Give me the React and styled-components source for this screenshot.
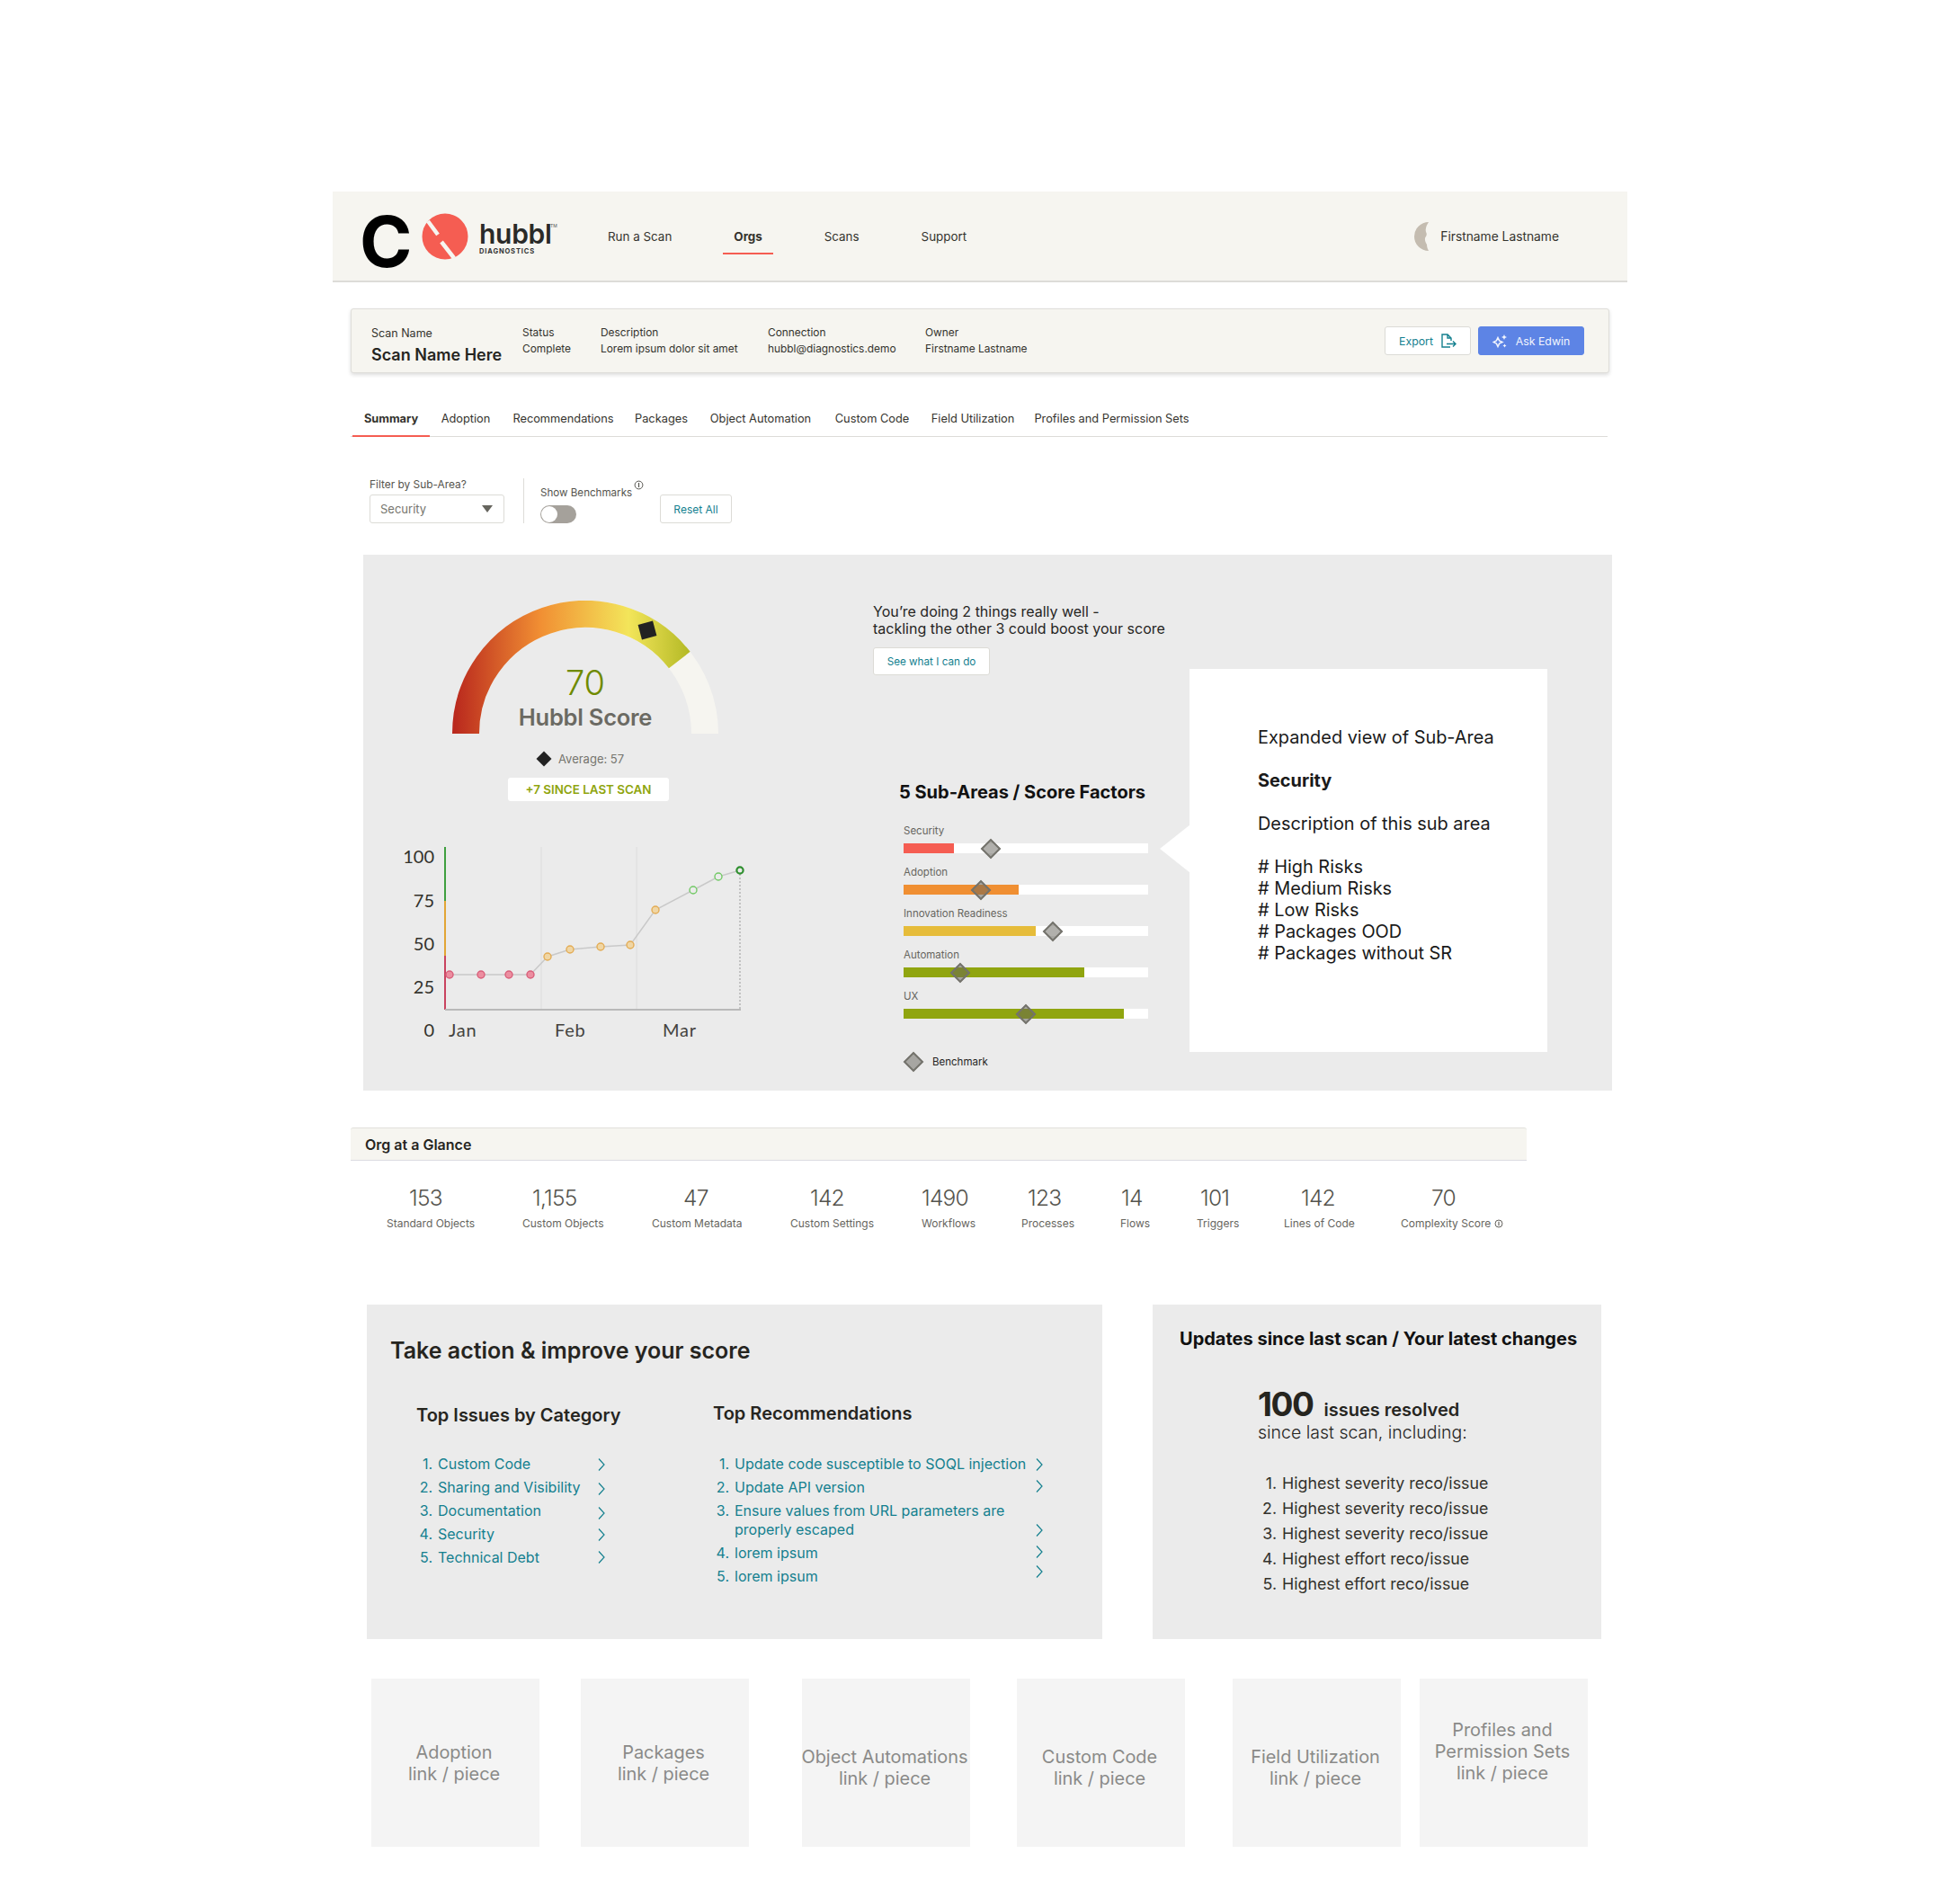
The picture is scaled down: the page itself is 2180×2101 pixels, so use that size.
import React from "react";
import styled, { createGlobalStyle } from "styled-components";

const SANS = `"Inter", "Liberation Sans", sans-serif`;
const TEAL = "#14808f";

const Global = createGlobalStyle`
  html, body { margin: 0; padding: 0; background: #fff; }
  body { font-family: ${SANS}; color: #26251f; letter-spacing: 0; }
  * { box-sizing: border-box; }
`;

const Page = styled.div`
  width: 2180px;
  height: 2101px;
  padding: 213px 0 0 370px;
  overflow: hidden;
`;
const Inner = styled.div`
  width: 1440px;
`;

const Header = styled.header`
  height: 101px;
  background: #f6f5f0;
  border-bottom: 2px solid #dddcd8;
  display: flex;
  align-items: flex-start;
  padding-left: 30px;
`;
const LogoC = styled.span`
  width: 61px;
  font-size: 79px;
  line-height: 100px;
  font-weight: 700;
  color: #000;
  margin-top: 5px;
`;
const LogoMark = styled.svg`
  width: 52px;
  height: 52px;
  margin-top: 24px;
  margin-left: 8px;
  flex: none;
`;
const Brand = styled.div`
  margin: 32px 0 0 12px;
  width: 128px;
  position: relative;
`;
const BrandName = styled.div`
  font-size: 30px;
  line-height: 30px;
  font-weight: 600;
  letter-spacing: -0.01em;
  color: #2a2a28;
`;
const BrandSub = styled.div`
  font-size: 7.5px;
  line-height: 8px;
  margin-top: 1px;
  font-weight: 700;
  letter-spacing: 0.115em;
  color: #333;
`;
const BrandTm = styled.span`
  position: absolute;
  left: 79px;
  top: 3px;
  font-size: 5px;
  line-height: 6px;
  color: #555;
`;
const Nav = styled.nav`
  display: flex;
  gap: 45px;
  margin-top: 34px;
  margin-left: 3px;
`;
const NavItem = styled.a`
  height: 36px;
  padding: 7px 12px 0;
  font-size: 13.4px;
  line-height: 18px;
  font-weight: ${(p) => (p.$active ? 700 : 400)};
  color: #34332d;
  border-bottom: 2px solid ${(p) => (p.$active ? "#f55d52" : "transparent")};
`;
const UserBox = styled.div`
  margin-left: auto;
  margin-right: 76px;
  margin-top: 34px;
  display: flex;
  align-items: center;
  gap: 13px;
  font-size: 13.8px;
  line-height: 32px;
  color: #34332d;
`;

const ScanBar = styled.section`
  margin: 29px 0 0 20px;
  width: 1400px;
  height: 72px;
  background: #f6f5f0;
  border: 1px solid #dfdeda;
  border-radius: 3px;
  box-shadow: 0 2px 4px rgba(0, 0, 0, 0.14);
  padding-left: 22px;
  padding-right: 27px;
  display: flex;
  align-items: center;
`;
const Meta = styled.div`
  width: ${(p) => p.$w}px;
  font-size: 11.9px;
  line-height: 18px;
  color: #34332d;
  align-self: flex-start;
  padding-top: 17px;
  white-space: nowrap;
`;
const ScanLabel = styled.div`
  font-size: 12.5px;
  line-height: 18px;
  margin-top: 1px;
`;
const ScanTitle = styled.div`
  font-size: 18px;
  line-height: 24px;
  font-weight: 600;
  margin-top: 3px;
  color: #26251f;
`;
const Actions = styled.div`
  margin-left: auto;
  display: flex;
  gap: 8px;
`;
const Btn = styled.button`
  font-family: ${SANS};
  height: ${(p) => p.$h || 32}px;
  width: ${(p) => p.$w}px;
  background: #fff;
  border: 1px solid #dcdbd6;
  border-radius: 3px;
  color: ${TEAL};
  font-size: ${(p) => p.$fs || 12.3}px;
  padding: 0;
  display: inline-flex;
  align-items: center;
  justify-content: center;
  gap: 8px;
  flex: none;
`;
const PrimaryBtn = styled(Btn)`
  background: #5d84e5;
  border-color: #5d84e5;
  color: #f2f5fd;
  gap: 9px;
`;

const Tabs = styled.div`
  margin: 24px 0 0 20px;
  width: 1398px;
  height: 47px;
  border-bottom: 1px solid #dddcd8;
  padding-left: 2px;
  display: flex;
  align-items: stretch;
`;
const Tab = styled.a`
  width: ${(p) => p.$w}px;
  height: 47px;
  display: flex;
  align-items: center;
  justify-content: center;
  padding-top: 7px;
  font-size: 12.8px;
  font-weight: ${(p) => (p.$active ? 700 : 400)};
  color: #34332d;
  white-space: nowrap;
  border-bottom: 2px solid ${(p) => (p.$active ? "#f55d52" : "transparent")};
`;

const Filters = styled.div`
  margin: 46px 0 0 41px;
  height: 50px;
  display: flex;
  align-items: flex-end;
`;
const FilterCol = styled.div`
  width: 150px;
`;
const FieldLabel = styled.div`
  font-size: 11.9px;
  line-height: 14px;
  color: #55544e;
  margin-bottom: 4px;
  white-space: nowrap;
`;
const Select = styled.div`
  height: 32px;
  background: #fff;
  border: 1px solid #dcdbd6;
  border-radius: 3px;
  padding: 0 12px 0 11px;
  display: flex;
  align-items: center;
  justify-content: space-between;
  font-size: 13px;
  color: #76756e;
`;
const Caret = styled.span`
  width: 0;
  height: 0;
  border-left: 6px solid transparent;
  border-right: 6px solid transparent;
  border-top: 8px solid #66655e;
`;
const VRule = styled.div`
  width: 1px;
  height: 50px;
  background: #dddcd8;
  margin: 0 18px 0 21px;
`;
const ToggleCol = styled.div`
  width: 133px;
  height: 50px;
  position: relative;
`;
const ToggleLabel = styled.div`
  display: flex;
  gap: 2px;
  font-size: 11.6px;
  line-height: 14px;
  color: #55544e;
  margin-top: 9px;
  white-space: nowrap;
`;
const InfoDot = styled.svg`
  width: ${(p) => p.$s || 11}px;
  height: ${(p) => p.$s || 11}px;
  margin-top: ${(p) => p.$mt ?? -7}px;
  flex: none;
`;
const Toggle = styled.div`
  margin-top: 7px;
  width: 40px;
  height: 20px;
  background: #a5a19b;
  border-radius: 10px;
  padding: 1px;
`;
const Knob = styled.div`
  width: 18px;
  height: 18px;
  background: #fff;
  border-radius: 50%;
`;

const Hero = styled.section`
  margin: 35px 0 0 34px;
  width: 1389px;
  height: 596px;
  background: #ebebeb;
  display: grid;
  grid-template-columns: 567px 352px 398px;
`;
const ScoreCol = styled.div`
  padding-top: 51px;
`;
const GaugeWrap = styled.div`
  width: 296px;
  height: 148px;
  margin-left: 99px;
  position: relative;
`;
const GaugeSvg = styled.svg`
  width: 296px;
  height: 148px;
  display: block;
`;
const ScoreValue = styled.div`
  position: absolute;
  left: 0;
  width: 100%;
  top: 68px;
  text-align: center;
  font-size: 38px;
  line-height: 46px;
  font-weight: 300;
  color: #6f8a00;
`;
const ScoreLabel = styled.div`
  position: absolute;
  left: 0;
  width: 100%;
  top: 114px;
  text-align: center;
  font-size: 25.5px;
  line-height: 32px;
  font-weight: 600;
  color: #6b6a63;
  letter-spacing: -0.01em;
`;
const AverageRow = styled.div`
  margin: 18px 0 0 195px;
  height: 20px;
  display: flex;
  align-items: center;
  gap: 10px;
  font-size: 13px;
  color: #76756e;
`;
const SmallDiamond = styled.span`
  width: 12px;
  height: 12px;
  background: #222;
  transform: rotate(45deg);
  flex: none;
`;
const SincePill = styled.div`
  margin: 11px 0 0 161px;
  width: 179px;
  height: 26px;
  background: #fff;
  border-radius: 3px;
  display: flex;
  align-items: center;
  justify-content: center;
  font-size: 13.4px;
  font-weight: 600;
  color: #8fa50f;
`;
const ChartSvg = styled.svg`
  display: block;
  margin: 40px 0 0 36px;
  width: 400px;
  height: 230px;
  font-family: "Lato", sans-serif;
`;
const FactorCol = styled.div`
  padding-top: 54px;
`;
const Message = styled.p`
  margin: 0;
  font-size: 16px;
  line-height: 19px;
  color: #26251f;
  white-space: nowrap;
`;
const FactorBtn = styled(Btn)`
  margin-top: 11px;
`;
const FactorTitle = styled.h3`
  margin: 118px 0 24px 29px;
  font-size: 20px;
  line-height: 24px;
  font-weight: 700;
  color: #111;
  white-space: nowrap;
`;
const Factor = styled.div`
  margin-left: 34px;
  width: 272px;
  height: 46px;
`;
const FactorLabel = styled.div`
  font-size: 11.5px;
  line-height: 15px;
  color: #66655e;
  margin-bottom: 6px;
`;
const Track = styled.div`
  height: 11px;
  background: #fff;
  position: relative;
`;
const Fill = styled.div`
  height: 11px;
  width: ${(p) => p.$w}px;
  background: ${(p) => p.$c};
`;
const Marker = styled.span`
  width: 16px;
  height: 16px;
  transform: rotate(45deg);
  background: rgba(100, 98, 90, 0.5);
  border: 2px solid #74736c;
`;
const TrackMarker = styled(Marker)`
  position: absolute;
  left: ${(p) => p.$x - 8}px;
  top: -2.5px;
`;
const Legend = styled.div`
  margin: 24px 0 0 37px;
  display: flex;
  align-items: center;
  gap: 13px;
  height: 20px;
  font-size: 11.5px;
  color: #26251f;
`;
const DetailCard = styled.aside`
  margin-top: 127px;
  height: 426px;
  background: #fff;
  position: relative;
  padding: 64px 0 0 76px;
  font-size: 19.9px;
  line-height: 24px;
  color: #1a1a1a;
  &::before {
    content: "";
    position: absolute;
    left: -33px;
    top: 173px;
    border-top: 27px solid transparent;
    border-bottom: 27px solid transparent;
    border-right: 34px solid #fff;
  }
`;
const DetailLine = styled.div`
  margin-bottom: ${(p) => p.$mb || 0}px;
  font-weight: ${(p) => (p.$bold ? 700 : 400)};
`;

const GlanceBar = styled.div`
  margin: 41px 0 0 20px;
  width: 1308px;
  height: 37px;
  background: #f6f5f0;
  border-top: 1px solid #e2e1dc;
  border-bottom: 1px solid #dcdce2;
  border-radius: 3px 3px 0 0;
  padding-left: 16px;
  display: flex;
  align-items: center;
  font-size: 16px;
  font-weight: 600;
  color: #26251f;
`;
const Stats = styled.div`
  margin: 23px 0 0 60px;
  display: flex;
  height: 137px;
`;
const Stat = styled.div`
  width: ${(p) => p.$w}px;
  flex: none;
`;
const StatValue = styled.div`
  font-size: 24.5px;
  line-height: 36px;
  font-weight: 300;
  color: #55544e;
  margin-left: ${(p) => p.$ml}px;
  letter-spacing: -0.03em;
`;
const StatLabel = styled.div`
  margin-top: 3px;
  font-size: 12px;
  line-height: 16px;
  color: #66655e;
  display: flex;
  gap: 4px;
  white-space: nowrap;
`;

const ActionRow = styled.div`
  margin-left: 38px;
  display: flex;
  gap: 56px;
`;
const ActionPanel = styled.section`
  width: 818px;
  height: 372px;
  background: #ebebeb;
  padding: 36px 0 0 26px;
`;
const ActionTitle = styled.h2`
  margin: 0;
  font-size: 25px;
  line-height: 30px;
  font-weight: 600;
  color: #26251f;
`;
const ActionCols = styled.div`
  display: grid;
  grid-template-columns: 331px 1fr;
  margin: 0 0 0 23px;
`;
const ColHeadA = styled.h3`
  margin: 44px 0 0 6px;
  font-size: 20px;
  line-height: 26px;
  font-weight: 600;
  color: #26251f;
`;
const ColHeadB = styled(ColHeadA)`
  margin: 42px 0 0 5px;
`;
const ListA = styled.ol`
  margin: 31px 0 0;
  padding: 0;
  list-style: none;
`;
const ListB = styled(ListA)`
  margin: 33px 0 0 -1px;
`;
const Item = styled.li`
  display: grid;
  grid-template-columns: 24px ${(p) => p.$text}px 8px;
  column-gap: 6px;
  margin-bottom: 5px;
  font-size: 16px;
  line-height: 21px;
  color: ${TEAL};
`;
const Num = styled.span`
  text-align: right;
`;
const Chevron = styled.svg`
  width: 8px;
  height: 14px;
  align-self: ${(p) => (p.$end ? "end" : "start")};
  margin-top: 4px;
  transform: translateY(${(p) => p.$dy || 0}px);
`;
const UpdatePanel = styled.section`
  width: 499px;
  height: 372px;
  background: #ebebeb;
  padding-top: 24px;
`;
const UpdateTitle = styled.h2`
  margin: 0 0 0 30px;
  font-size: 20px;
  line-height: 28px;
  font-weight: 700;
  color: #111;
  white-space: nowrap;
`;
const Resolved = styled.div`
  margin: 37px 0 0 117px;
  display: flex;
  align-items: baseline;
  gap: 12px;
  color: #26251f;
  font-weight: 600;
  font-size: 20px;
  line-height: 44px;
`;
const ResolvedNum = styled.span`
  font-size: 37px;
  font-weight: 700;
  letter-spacing: -0.04em;
`;
const ResolvedSub = styled.div`
  margin: -10px 0 0 117px;
  font-size: 19.5px;
  line-height: 26px;
  font-weight: 300;
  color: #26251f;
`;
const UpdateList = styled.ol`
  margin: 30px 0 0 112px;
  padding: 0;
  list-style: none;
`;
const UpdateItem = styled.li`
  display: grid;
  grid-template-columns: 26px 1fr;
  column-gap: 6px;
  font-size: 17.8px;
  line-height: 28px;
  color: #33322c;
`;

const TileRow = styled.div`
  margin: 44px 0 0 43px;
  display: flex;
`;
const Tile = styled.div`
  width: 187px;
  height: 187px;
  flex: none;
  margin-left: ${(p) => p.$ml || 0}px;
  background: #f4f4f4;
  display: flex;
  align-items: center;
  justify-content: center;
  text-align: center;
  padding-top: ${(p) => p.$pt || 0}px;
  padding-bottom: ${(p) => p.$pb || 0}px;
  padding-right: 3px;
  font-size: 19.9px;
  line-height: 24px;
  color: #8a8a88;
  white-space: nowrap;
`;

const navItems = ["Run a Scan", "Orgs", "Scans", "Support"];
const tabs = [
  ["Summary", 86],
  ["Adoption", 80],
  ["Recommendations", 137],
  ["Packages", 81],
  ["Object Automation", 140],
  ["Custom Code", 108],
  ["Field Utilization", 116],
  ["Profiles and Permission Sets", 193],
];
const factors = [
  ["Security", 56, "#f55d52", 97],
  ["Adoption", 128, "#f08f32", 86],
  ["Innovation Readiness", 147, "#e6bc3a", 166],
  ["Automation", 201, "#90a50f", 63],
  ["UX", 245, "#90a50f", 136],
];
const stats = [
  ["153", "Standard Objects", 25, 151],
  ["1,155", "Custom Objects", 11, 144],
  ["47", "Custom Metadata", 35, 154],
  ["142", "Custom Settings", 22, 146],
  ["1490", "Workflows", 0, 111],
  ["123", "Processes", 7, 110],
  ["14", "Flows", 1, 85],
  ["101", "Triggers", 4, 97],
  ["142", "Lines of Code", 19, 130],
  ["70", "Complexity Score", 34, 130],
];
const issues = [
  ["Custom Code", 0],
  ["Sharing and Visibility", 1],
  ["Documentation", 2],
  ["Security", 0],
  ["Technical Debt", -1],
];
const recos = [
  ["Update code susceptible to SOQL injection", 0],
  ["Update API version", -2],
  ["Ensure values from URL parameters are properly escaped", -3, true],
  ["lorem ipsum", -2],
  ["lorem ipsum", -6],
];
const updates = [
  "Highest severity reco/issue",
  "Highest severity reco/issue",
  "Highest severity reco/issue",
  "Highest effort reco/issue",
  "Highest effort reco/issue",
];
const tiles = [
  { lines: ["Adoption", "link / piece"], ml: 0, pt: 0 },
  { lines: ["Packages", "link / piece"], ml: 46, pt: 0 },
  { lines: ["Object Automations", "link / piece"], ml: 59, pt: 10 },
  { lines: ["Custom Code", "link / piece"], ml: 52, pt: 10 },
  { lines: ["Field Utilization", "link / piece"], ml: 53, pt: 10 },
  { lines: ["Profiles and", "Permission Sets", "link / piece"], ml: 21, pb: 25 },
];
const points = [
  [500, 1083, "r"],
  [535, 1083, "r"],
  [566, 1083, "r"],
  [590, 1083, "r"],
  [609, 1063, "o"],
  [634, 1055, "o"],
  [668, 1052, "o"],
  [701, 1050, "o"],
  [729, 1011, "o"],
  [771, 989, "g"],
  [799, 974, "g"],
];
const pointStyle = {
  r: { fill: "#ec8ea0", stroke: "#d95f7a" },
  o: { fill: "#f0d6a4", stroke: "#e3ac55" },
  g: { fill: "#ebebeb", stroke: "#72c965" },
};

const Info = (props) => (
  <InfoDot viewBox="0 0 11 11" {...props}>
    <circle cx="5.5" cy="5.5" r="4.4" fill="none" stroke="#55544e" strokeWidth="1" />
    <path d="M5.5 3v5" stroke="#55544e" strokeWidth="1.2" />
  </InfoDot>
);
const Chev = ({ dy, end }) => (
  <Chevron viewBox="0 0 8 14" $dy={dy} $end={end}>
    <path d="M1 .5l6 6.5-6 6.5" fill="none" stroke={TEAL} strokeWidth="1.2" />
  </Chevron>
);

export default function App() {
  return (
    <Page>
      <Global />
      <Inner>
        <Header>
          <LogoC>C</LogoC>
          <LogoMark viewBox="0 0 52 52">
            <circle cx="26" cy="26" r="25.5" fill="#f55d52" />
            <path d="M7 9l11 15M22 32l14 18" stroke="#f6f5f0" strokeWidth="4.5" />
          </LogoMark>
          <Brand>
            <BrandName>hubbl</BrandName>
            <BrandTm>TM</BrandTm>
            <BrandSub>DIAGNOSTICS</BrandSub>
          </Brand>
          <Nav>
            {navItems.map((n) => (
              <NavItem key={n} $active={n === "Orgs"}>
                {n}
              </NavItem>
            ))}
          </Nav>
          <UserBox>
            <svg width="17" height="32" viewBox="0 0 17 32">
              <path d="M17 0A16 16 0 0 0 17 32C16 30 15 28 15 25C13 22 12 18 14 16C15 14 15 13 14 11C13 7 15 3 17 0Z" fill="#c4bcb0" />
            </svg>
            Firstname Lastname
          </UserBox>
        </Header>

        <ScanBar>
          <Meta $w={168}>
            <ScanLabel>Scan Name</ScanLabel>
            <ScanTitle>Scan Name Here</ScanTitle>
          </Meta>
          <Meta $w={87}>
            <div>Status</div>
            <div>Complete</div>
          </Meta>
          <Meta $w={186}>
            <div>Description</div>
            <div>Lorem ipsum dolor sit amet</div>
          </Meta>
          <Meta $w={175}>
            <div>Connection</div>
            <div>hubbl@diagnostics.demo</div>
          </Meta>
          <Meta $w={140}>
            <div>Owner</div>
            <div>Firstname Lastname</div>
          </Meta>
          <Actions>
            <Btn $w={96}>
              Export
              <svg width="18" height="18" viewBox="0 0 18 18" fill="none" stroke={TEAL} strokeWidth="1.4">
                <path d="M11 16H2V2h6l4 4v3M8 2v4h4M7 12.5h10M14 9.5l3 3-3 3" />
              </svg>
            </Btn>
            <PrimaryBtn $w={118}>
              <svg width="17" height="17" viewBox="0 0 17 17">
                <path d="M6 4.5l1.6 3.4L11 9.5l-3.4 1.6L6 14.5l-1.6-3.4L1 9.5l3.4-1.6z" fill="none" stroke="#f2f5fd" strokeWidth="1.5" />
                <path d="M13 1l.9 2.1L16 4l-2.1.9L13 7l-.9-2.1L10 4l2.1-.9zM13.5 11.5l.7 1.3 1.3.7-1.3.7-.7 1.3-.7-1.3-1.3-.7 1.3-.7z" fill="#f2f5fd" />
              </svg>
              Ask Edwin
            </PrimaryBtn>
          </Actions>
        </ScanBar>

        <Tabs>
          {tabs.map(([t, w]) => (
            <Tab key={t} $w={w} $active={t === "Summary"}>
              {t}
            </Tab>
          ))}
        </Tabs>

        <Filters>
          <FilterCol>
            <FieldLabel>Filter by Sub-Area?</FieldLabel>
            <Select>
              Security
              <Caret />
            </Select>
          </FilterCol>
          <VRule />
          <ToggleCol>
            <ToggleLabel>
              Show Benchmarks
              <Info />
            </ToggleLabel>
            <Toggle>
              <Knob />
            </Toggle>
          </ToggleCol>
          <Btn $w={80} $fs={12}>Reset All</Btn>
        </Filters>

        <Hero>
          <ScoreCol>
            <GaugeWrap>
              <GaugeSvg viewBox="503 668 296 148">
                <defs>
                  <linearGradient id="gaugeFill" gradientUnits="userSpaceOnUse" x1="503" y1="0" x2="768" y2="0">
                    <stop offset="0" stopColor="#b8261d" />
                    <stop offset="0.37" stopColor="#f18f33" />
                    <stop offset="0.74" stopColor="#f3e55a" />
                    <stop offset="1" stopColor="#b3b925" />
                  </linearGradient>
                </defs>
                <path d="M518 816A133 133 0 0 1 784 816" fill="none" stroke="#f6f5f0" strokeWidth="30" />
                <path d="M518 816A133 133 0 0 1 755.8 734.1" fill="none" stroke="url(#gaugeFill)" strokeWidth="30" />
                <rect x="711.5" y="692.5" width="17" height="17" fill="#222" transform="rotate(-15 720 701)" />
              </GaugeSvg>
              <ScoreValue>70</ScoreValue>
              <ScoreLabel>Hubbl Score</ScoreLabel>
            </GaugeWrap>
            <AverageRow>
              <SmallDiamond />
              Average: 57
            </AverageRow>
            <SincePill>+7 SINCE LAST SCAN</SincePill>
            <ChartSvg viewBox="440 930 400 230">
              <path d="M602 941V1122M708 941V1122" stroke="#dcdcdc" strokeWidth="1" />
              <path d="M495 941V1001" stroke="#3f9f3f" strokeWidth="2" />
              <path d="M495 1001V1062" stroke="#e2a535" strokeWidth="2" />
              <path d="M495 1062V1122" stroke="#c9435f" strokeWidth="2" />
              <path d="M495 1122H824" stroke="#b9b9b9" strokeWidth="2" />
              <path d="M823 967V1122" stroke="#999" strokeWidth="1" strokeDasharray="2 2" />
              <polyline
                points={[...points, [823, 967]].map((p) => `${p[0]},${p[1]}`).join(" ")}
                fill="none"
                stroke="#c9c9c9"
                strokeWidth="1.5"
              />
              {points.map(([x, y, k]) => (
                <circle key={x} cx={x} cy={y} r="4" strokeWidth="1.4" {...pointStyle[k]} />
              ))}
              <circle cx="823" cy="967" r="3.6" fill="#ebebeb" stroke="#2f8f2f" strokeWidth="2.2" />
              <g fontSize="20" fill="#33322c" textAnchor="end">
                <text x="483" y="959">100</text>
                <text x="483" y="1008">75</text>
                <text x="483" y="1056">50</text>
                <text x="483" y="1104">25</text>
                <text x="483" y="1152">0</text>
              </g>
              <g fontSize="20" fill="#44433e" letterSpacing="0.8">
                <text x="499" y="1152">Jan</text>
                <text x="617" y="1152">Feb</text>
                <text x="737" y="1152">Mar</text>
              </g>
            </ChartSvg>
          </ScoreCol>

          <FactorCol>
            <Message>
              You’re doing 2 things really well -
              <br />
              tackling the other 3 could boost your score
            </Message>
            <FactorBtn $w={130} $h={31} $fs={11.7}>See what I can do</FactorBtn>
            <FactorTitle>5 Sub-Areas / Score Factors</FactorTitle>
            {factors.map(([name, w, c, x]) => (
              <Factor key={name}>
                <FactorLabel>{name}</FactorLabel>
                <Track>
                  <Fill $w={w} $c={c} />
                  <TrackMarker $x={x} />
                </Track>
              </Factor>
            ))}
            <Legend>
              <Marker />
              Benchmark
            </Legend>
          </FactorCol>

          <DetailCard>
            <DetailLine $mb={24}>Expanded view of Sub-Area</DetailLine>
            <DetailLine $mb={24} $bold>Security</DetailLine>
            <DetailLine $mb={24}>Description of this sub area</DetailLine>
            <DetailLine># High Risks</DetailLine>
            <DetailLine># Medium Risks</DetailLine>
            <DetailLine># Low Risks</DetailLine>
            <DetailLine># Packages OOD</DetailLine>
            <DetailLine># Packages without SR</DetailLine>
          </DetailCard>
        </Hero>

        <GlanceBar>Org at a Glance</GlanceBar>
        <Stats>
          {stats.map(([v, l, ml, w]) => (
            <Stat key={l} $w={w}>
              <StatValue $ml={ml}>{v}</StatValue>
              <StatLabel>
                {l}
                {l === "Complexity Score" && <Info $mt={3} $s={10} />}
              </StatLabel>
            </Stat>
          ))}
        </Stats>

        <ActionRow>
          <ActionPanel>
            <ActionTitle>Take action &amp; improve your score</ActionTitle>
            <ActionCols>
              <div>
                <ColHeadA>Top Issues by Category</ColHeadA>
                <ListA>
                  {issues.map(([t, dy], i) => (
                    <Item key={t} $text={172}>
                      <Num>{i + 1}.</Num>
                      <span>{t}</span>
                      <Chev dy={dy} />
                    </Item>
                  ))}
                </ListA>
              </div>
              <div>
                <ColHeadB>Top Recommendations</ColHeadB>
                <ListB>
                  {recos.map(([t, dy, end], i) => (
                    <Item key={i} $text={329}>
                      <Num>{i + 1}.</Num>
                      <span>{t}</span>
                      <Chev dy={dy} end={end} />
                    </Item>
                  ))}
                </ListB>
              </div>
            </ActionCols>
          </ActionPanel>
          <UpdatePanel>
            <UpdateTitle>Updates since last scan / Your latest changes</UpdateTitle>
            <Resolved>
              <ResolvedNum>100</ResolvedNum>
              issues resolved
            </Resolved>
            <ResolvedSub>since last scan, including:</ResolvedSub>
            <UpdateList>
              {updates.map((u, i) => (
                <UpdateItem key={i}>
                  <Num>{i + 1}.</Num>
                  <span>{u}</span>
                </UpdateItem>
              ))}
            </UpdateList>
          </UpdatePanel>
        </ActionRow>

        <TileRow>
          {tiles.map((t) => (
            <Tile key={t.lines[0]} $ml={t.ml} $pt={t.pt} $pb={t.pb}>
              <div>
                {t.lines.map((l) => (
                  <div key={l}>{l}</div>
                ))}
              </div>
            </Tile>
          ))}
        </TileRow>
      </Inner>
    </Page>
  );
}
